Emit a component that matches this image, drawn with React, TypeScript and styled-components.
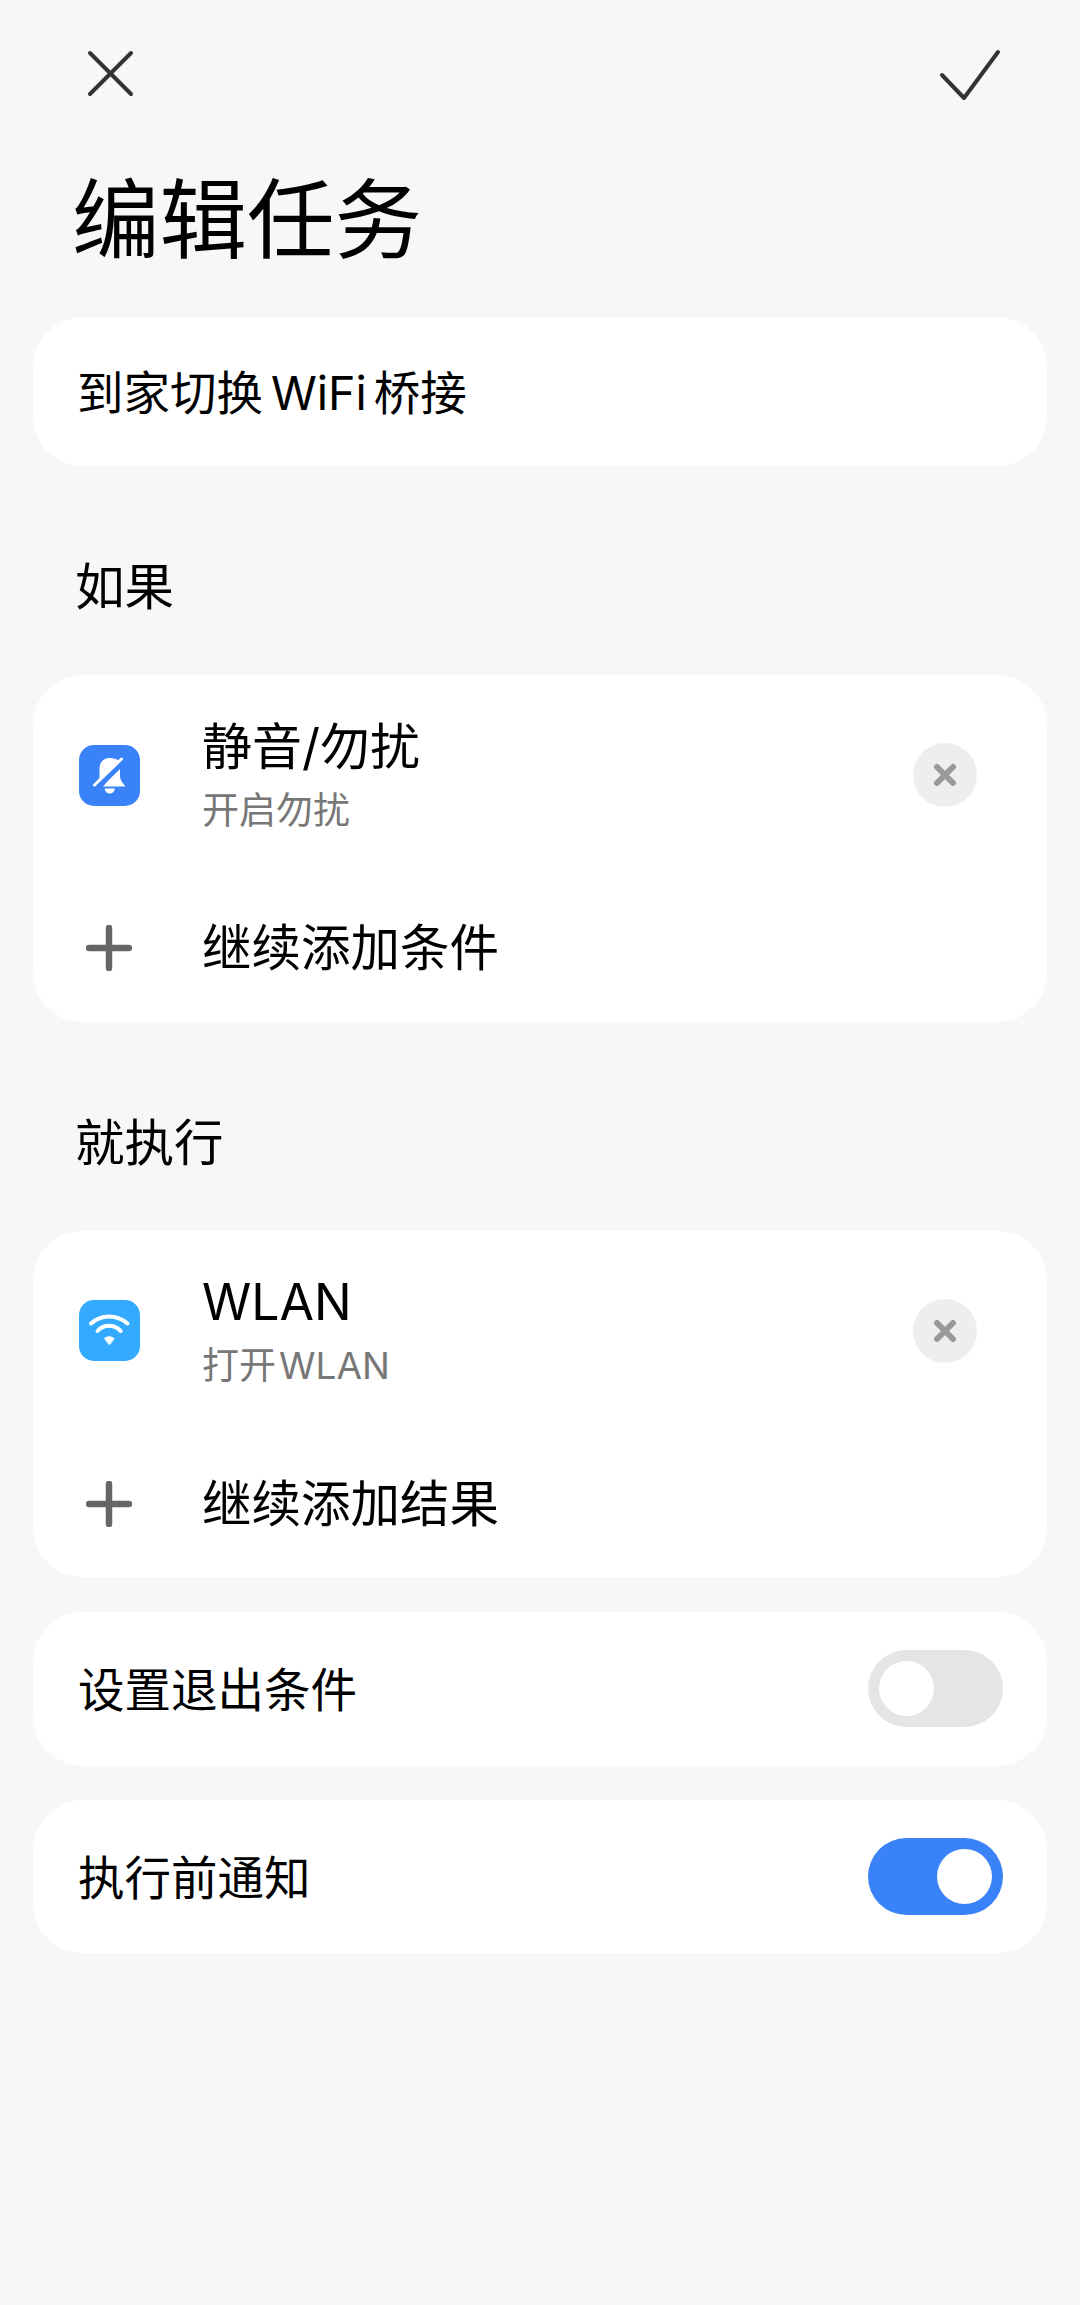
import { createGlobalStyle, styled } from 'styled-components';

const GlobalStyle = createGlobalStyle`
  html, body {
    margin: 0;
    background: #f7f7f7;
  }
  body {
    font-family: Inter, "Noto Sans CJK SC", sans-serif;
    color: #000;
  }
`;

const Page = styled.div`
  width: 1080px;
  height: 2305px;
  box-sizing: border-box;
  padding: 42px 33px 0;
  background: #f7f7f7;
`;

const Header = styled.header`
  display: flex;
  justify-content: space-between;
  padding: 0 45px;
`;

const HeaderIcon = styled.svg`
  display: block;
  width: 64px;
  height: 64px;
  fill: none;
  stroke: #333;
  stroke-width: 4;
  stroke-linecap: round;
  stroke-linejoin: round;
`;

const Title = styled.h1`
  margin: 64px 0 47px 39px;
  font-size: 87.5px;
  font-weight: 400;
  line-height: 100px;
`;

const Card = styled.section`
  background: #fff;
  border-radius: 50px;
`;

const NameRow = styled(Card)`
  display: flex;
  align-items: center;
  height: 149px;
  box-sizing: border-box;
  padding: 0 0 5px 44px;
  font-size: 46.5px;
`;

const LatinGap = styled.span<{ $left: number; $right: number }>`
  margin: 0 ${({ $right }) => $right}px 0 ${({ $left }) => $left}px;
`;

const SectionLabel = styled.h2`
  margin: 91px 0 58px 42px;
  font-size: 49.5px;
  font-weight: 400;
  line-height: 60px;
`;

const ItemRow = styled.div`
  display: flex;
  align-items: center;
  height: 200px;
  padding: 0 47px 0 46px;
`;

const AppIcon = styled.div<{ $color: string }>`
  flex: none;
  width: 61px;
  height: 61px;
  border-radius: 15px;
  background: ${({ $color }) => $color};
  display: flex;
  align-items: center;
  justify-content: center;
`;

const ItemText = styled.div`
  flex: 1;
  margin-left: 62px;
  display: flex;
  flex-direction: column;
  gap: 11px;
`;

const ItemTitle = styled.div`
  font-size: 50px;
  line-height: 60px;
`;

const ItemSub = styled.div`
  font-size: 37px;
  line-height: 46px;
  color: #777;
`;

const RemoveButton = styled.button`
  flex: none;
  width: 64px;
  height: 64px;
  margin-right: 23px;
  padding: 0;
  border: 0;
  border-radius: 50%;
  background: #eeeeee;
  display: flex;
  align-items: center;
  justify-content: center;
`;

const AddRow = styled.div`
  display: flex;
  align-items: center;
  height: 146.5px;
  padding-left: 53px;
`;

const AddLabel = styled.span`
  margin-left: 70px;
  font-size: 49.5px;
  line-height: 60px;
`;

const Settings = styled.div`
  display: flex;
  flex-direction: column;
  gap: 34px;
  margin-top: 35px;
`;

const SettingRow = styled(Card)`
  display: flex;
  align-items: center;
  justify-content: space-between;
  height: 153.5px;
  padding: 0 44px 0 45px;
  font-size: 46.5px;
`;

const SettingLabel = styled.span`
  padding-bottom: 4px;
`;

const Toggle = styled.div<{ $on?: boolean }>`
  width: 135px;
  height: 77px;
  box-sizing: border-box;
  padding: 11px;
  border-radius: 39px;
  background: ${({ $on }) => ($on ? '#3a82f7' : '#e5e5e5')};
  display: flex;
  justify-content: ${({ $on }) => ($on ? 'flex-end' : 'flex-start')};
`;

const Knob = styled.div`
  width: 55px;
  height: 55px;
  border-radius: 50%;
  background: #fff;
`;

const CloseIcon = () => (
  <HeaderIcon viewBox="0 0 64 64">
    <path d="M12 11 L53 52 M53 11 L12 52" />
  </HeaderIcon>
);

const CheckIcon = () => (
  <HeaderIcon viewBox="0 0 64 64">
    <path d="M4 33 L26 56 L60 10" />
  </HeaderIcon>
);

const BellOffIcon = () => (
  <svg width="61" height="61" viewBox="0 0 61 61">
    <path d="M30.5 13 C24 13 20.5 18 20.5 24 V34 L40 15.5 C37.5 14 34 13 30.5 13 Z" fill="#fff" />
    <path d="M41 22 V31 C41 35 44 38 46.5 41.5 H24 Z" fill="#fff" />
    <path d="M25.5 43.5 H36 C35.5 46.5 33.5 48.5 30.8 48.5 C28 48.5 26 46.5 25.5 43.5 Z" fill="#fff" />
    <path d="M17 43 L46 15" stroke="#3a82f7" strokeWidth="6" />
    <path d="M15.5 40 L42.5 14" stroke="#fff" strokeWidth="3" strokeLinecap="round" />
  </svg>
);

const WifiIcon = () => (
  <svg width="61" height="61" viewBox="0 0 61 61" fill="none" stroke="#fff" strokeLinecap="round">
    <path d="M12 23.5 C22 14 38 14 48.5 23.5" strokeWidth="4" />
    <path d="M18.5 31 C25 24 35 24 41.7 31" strokeWidth="4" />
    <path d="M30.2 44.5 L25.5 38.5 C28.5 36.2 32 36.2 35 38.5 Z" fill="#fff" stroke="#fff" strokeWidth="1" strokeLinejoin="round" />
  </svg>
);

const RemoveIcon = () => (
  <svg width="24" height="24" viewBox="0 0 24 24" fill="none" stroke="#999" strokeWidth="6" strokeLinecap="round">
    <path d="M4 4 L20 20 M20 4 L4 20" />
  </svg>
);

const PlusIcon = () => (
  <svg width="46" height="46" viewBox="0 0 46 46" fill="none" stroke="#666" strokeWidth="6.5" strokeLinecap="round">
    <path d="M23 3 V43 M3 23 H43" />
  </svg>
);

type ActionCardProps = {
  icon: React.ReactNode;
  color: string;
  title: string;
  subtitle: React.ReactNode;
  addLabel: string;
};

const ActionCard = ({ icon, color, title, subtitle, addLabel }: ActionCardProps) => (
  <Card>
    <ItemRow>
      <AppIcon $color={color}>{icon}</AppIcon>
      <ItemText>
        <ItemTitle>{title}</ItemTitle>
        <ItemSub>{subtitle}</ItemSub>
      </ItemText>
      <RemoveButton>
        <RemoveIcon />
      </RemoveButton>
    </ItemRow>
    <AddRow>
      <PlusIcon />
      <AddLabel>{addLabel}</AddLabel>
    </AddRow>
  </Card>
);

export default function App() {
  return (
    <Page>
      <GlobalStyle />
      <Header>
        <CloseIcon />
        <CheckIcon />
      </Header>
      <Title>编辑任务</Title>
      <NameRow>
        <span>
          到家切换
          <LatinGap $left={8} $right={7}>WiFi</LatinGap>
          桥接
        </span>
      </NameRow>
      <SectionLabel>如果</SectionLabel>
      <ActionCard
        icon={<BellOffIcon />}
        color="#3a82f7"
        title="静音/勿扰"
        subtitle="开启勿扰"
        addLabel="继续添加条件"
      />
      <SectionLabel>就执行</SectionLabel>
      <ActionCard
        icon={<WifiIcon />}
        color="#33aaff"
        title="WLAN"
        subtitle={
          <>
            打开<LatinGap $left={3} $right={0}>WLAN</LatinGap>
          </>
        }
        addLabel="继续添加结果"
      />
      <Settings>
        <SettingRow>
          <SettingLabel>设置退出条件</SettingLabel>
          <Toggle>
            <Knob />
          </Toggle>
        </SettingRow>
        <SettingRow>
          <SettingLabel>执行前通知</SettingLabel>
          <Toggle $on>
            <Knob />
          </Toggle>
        </SettingRow>
      </Settings>
    </Page>
  );
}
